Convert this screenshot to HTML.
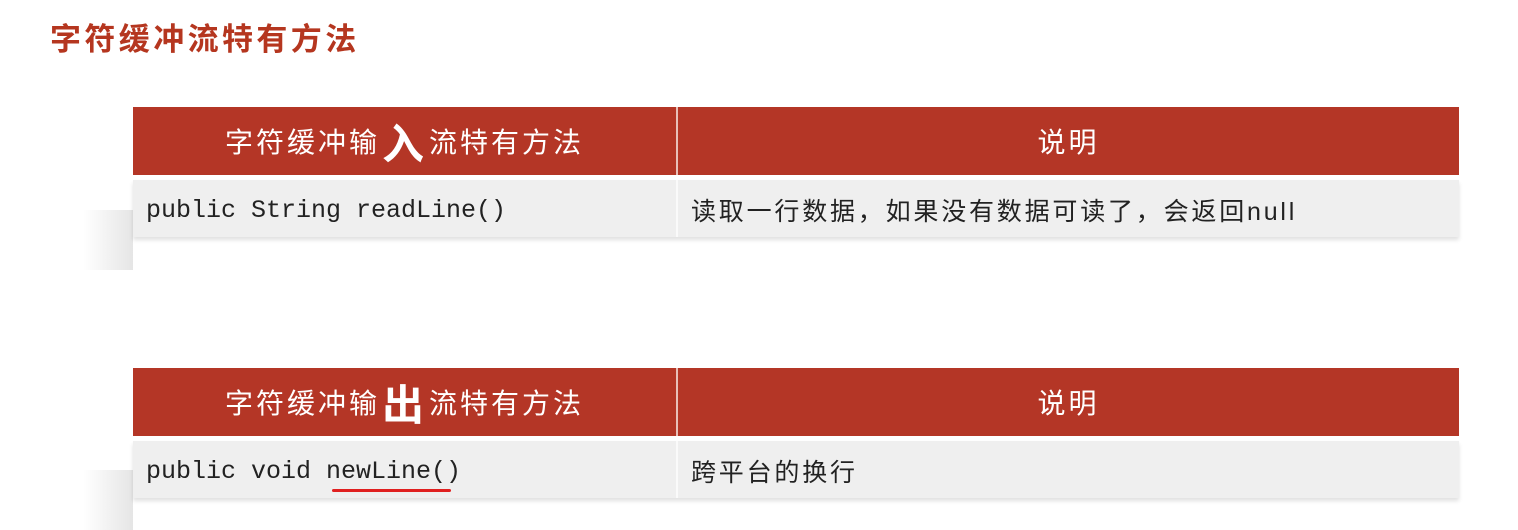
<!DOCTYPE html>
<html><head><meta charset="utf-8"><style>
*{box-sizing:border-box}
body{margin:0;width:1518px;height:517px;background:#fff;overflow:hidden;position:relative;font-family:"Liberation Sans","Noto Sans CJK SC",sans-serif}
.t{position:absolute;left:50px;top:18px;font-size:31px;font-weight:bold;color:#b5361f;letter-spacing:3.4px;line-height:44px}
.tbl{position:absolute;left:133px;width:1326px}
.h{height:68px;background:#b43626;display:flex;color:#fff}
.h div{display:flex;align-items:center;justify-content:center;font-size:28px;letter-spacing:3px}
.c1{width:545px;flex:none;border-right:2px solid #e8c0b8}
.c2{flex:1}
.r{height:57px;margin-top:5px;background:#efefef;display:flex;box-shadow:0 3px 4px rgba(0,0,0,.12)}
.r div{display:flex;align-items:center}
.r .c1{border-right:2px solid #fafafa}
.code{font-family:"Liberation Mono",monospace;font-size:25px;color:#222;padding-left:13px;padding-top:4px}
.d{font-size:25px;color:#222;padding-left:13px;letter-spacing:2.8px;padding-top:2px}
.big{font-size:42px;font-weight:bold;margin:0 2px}
.sh{position:absolute;width:50px;height:60px;background:linear-gradient(90deg,rgba(255,255,255,0),rgba(0,0,0,.1))}
</style></head><body>
<div class="t">字符缓冲流特有方法</div>
<div class="sh" style="left:83px;top:210px"></div>
<div class="sh" style="left:83px;top:470px"></div>
<div class="tbl" style="top:107px">
<div class="h"><div class="c1">字符缓冲输<span class="big">入</span>流特有方法</div><div class="c2">说明</div></div>
<div class="r"><div class="c1 code">public String readLine()</div><div class="c2 d">读取一行数据，如果没有数据可读了，会返回null</div></div>
</div>
<div class="tbl" style="top:368px">
<div class="h"><div class="c1">字符缓冲输<span class="big">出</span>流特有方法</div><div class="c2">说明</div></div>
<div class="r"><div class="c1 code">public void&nbsp;<span style="position:relative">newLine()<span style="position:absolute;left:6px;right:10px;bottom:-6px;height:3px;background:#e02020;border-radius:2px"></span></span></div><div class="c2 d">跨平台的换行</div></div>
</div>
</body></html>
